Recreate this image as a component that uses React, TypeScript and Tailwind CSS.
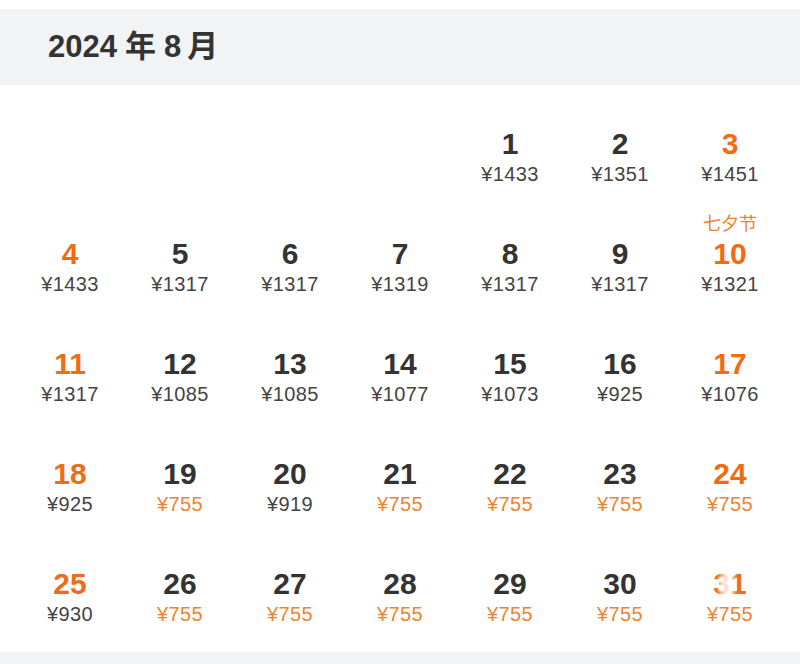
import React from "react";

type Day = {
  d: number;
  price: number;
  weekend?: boolean;
  low?: boolean;
  label?: string;
};

const prices: Record<number, number> = {
  1: 1433, 2: 1351, 3: 1451, 4: 1433, 5: 1317, 6: 1317, 7: 1319, 8: 1317, 9: 1317, 10: 1321,
  11: 1317, 12: 1085, 13: 1085, 14: 1077, 15: 1073, 16: 925, 17: 1076, 18: 925, 19: 755,
  20: 919, 21: 755, 22: 755, 23: 755, 24: 755, 25: 930, 26: 755, 27: 755, 28: 755, 29: 755,
  30: 755, 31: 755,
};

// Aug 2024: 1st is Thursday, week starts on Sunday
const OFFSET = 4;

const days: (Day | null)[] = [
  ...Array.from({ length: OFFSET }, () => null),
  ...Array.from({ length: 31 }, (_, i) => {
    const d = i + 1;
    const col = (OFFSET + i) % 7;
    return {
      d,
      price: prices[d],
      weekend: col === 0 || col === 6,
      low: prices[d] === 755,
      label: d === 10 ? "七夕节" : undefined,
    };
  }),
];

const font = {
  fontFamily: '"Liberation Sans", "Noto Sans CJK SC", sans-serif',
};

const Cell = ({ day }: { day: Day | null }) => {
  if (!day) return <div className="h-[110px]" />;
  return (
    <div className="relative flex h-[110px] flex-col items-center pt-[12px]">
      <div className="h-[23px] text-[18px] leading-[23px] text-[#ec8431]">
        {day.label ?? ""}
      </div>
      <div
        className={`text-[30px] font-bold leading-[36px] ${
          day.weekend ? "text-[#f06c12]" : "text-[#333333]"
        }`}
      >
        {day.d}
      </div>
      <div
        className={`text-[20px] leading-[24px] tracking-[0.4px] ${
          day.low ? "text-[#ec8431]" : "text-[#444444]"
        }`}
      >
        ¥{day.price}
      </div>
      {day.d === 31 && (
        <div className="absolute left-[44px] top-[41px] h-[26px] w-[16px] rounded-full bg-white/80 blur-[2px]" />
      )}
    </div>
  );
};

export default function App() {
  return (
    <div className="h-[664px] w-[800px] bg-white" style={font}>
      <div className="h-[9px]" />
      <div className="flex h-[76px] items-center bg-[#f2f3f5] pl-[48px]">
        <h1 className="text-[31px] font-bold text-[#333333]">
          2024<span className="mx-[8px]">年</span>8<span className="ml-[6px]">月</span>
        </h1>
      </div>
      <div className="grid h-[567px] auto-rows-[110px] grid-cols-7 content-start px-[15px] pt-[6px]">
        {days.map((day, i) => (
          <Cell key={i} day={day} />
        ))}
      </div>
      <div className="h-[12px] bg-[#f2f3f5]" />
    </div>
  );
}
